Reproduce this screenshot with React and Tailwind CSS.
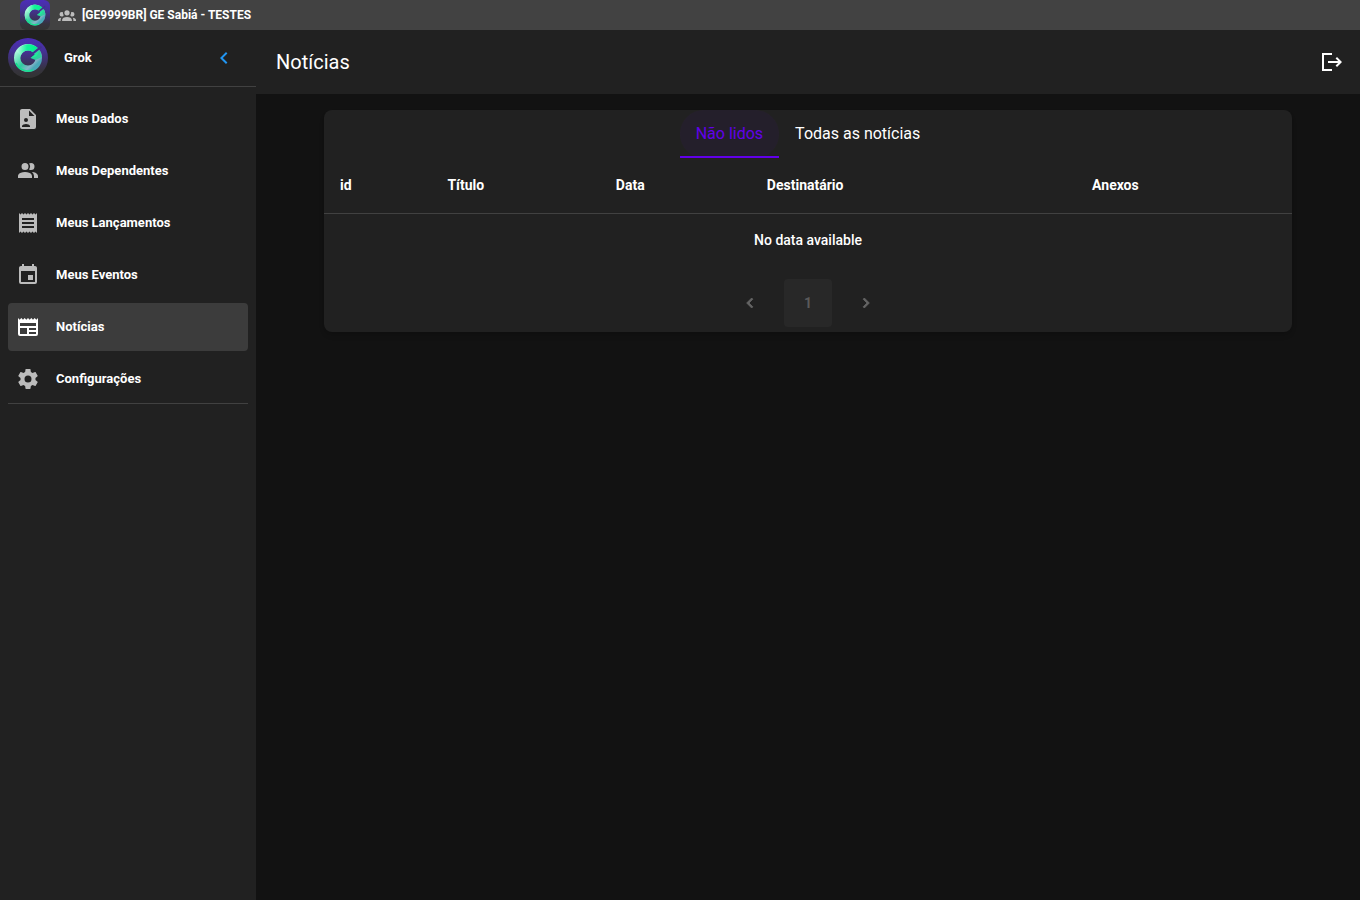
import { useState } from 'react';

const icons = {
  fileAccount: 'M6,2C4.89,2 4,2.89 4,4V20A2,2 0 0,0 6,22H18A2,2 0 0,0 20,20V8L14,2H6M13,3.5L18.5,9H13V3.5M10,11A2,2 0 0,1 12,13A2,2 0 0,1 10,15A2,2 0 0,1 8,13A2,2 0 0,1 10,11M14,20H6V19C6,17.67 8.67,17 10,17C11.33,17 14,17.67 14,19V20Z',
  accounts: 'M16 17V19H2V17S2 13 9 13 16 17 16 17M12.5 7.5A3.5 3.5 0 1 0 9 11A3.5 3.5 0 0 0 12.5 7.5M15.94 13A5.32 5.32 0 0 1 18 17V19H22V17S22 13.37 15.94 13M15 4A3.39 3.39 0 0 0 13.07 4.59A5 5 0 0 1 13.07 10.41A3.39 3.39 0 0 0 15 11A3.5 3.5 0 0 0 15 4Z',
  receipt: 'M3,22L4.5,20.5L6,22L7.5,20.5L9,22L10.5,20.5L12,22L13.5,20.5L15,22L16.5,20.5L18,22L19.5,20.5L21,22V2L19.5,3.5L18,2L16.5,3.5L15,2L13.5,3.5L12,2L10.5,3.5L9,2L7.5,3.5L6,2L4.5,3.5L3,2M18,9H6V7H18M18,13H6V11H18M18,17H6V15H18V17Z',
  calendar: 'M19,19H5V8H19M16,1V3H8V1H6V3H5C3.89,3 3,3.89 3,5V19A2,2 0 0,0 5,21H19A2,2 0 0,0 21,19V5C21,3.89 20.1,3 19,3H18V1M17,12H12V17H17V12Z',
  newspaper: 'M20,11H4V8H20M20,15H13V13H20M20,19H13V17H20M11,19H4V13H11M20.33,4.67L18.67,3L17,4.67L15.33,3L13.67,4.67L12,3L10.33,4.67L8.67,3L7,4.67L5.33,3L3.67,4.67L2,3V19A2,2 0 0,0 4,21H20A2,2 0 0,0 22,19V3L20.33,4.67Z',
  cog: 'M12,15.5A3.5,3.5 0 0,1 8.5,12A3.5,3.5 0 0,1 12,8.5A3.5,3.5 0 0,1 15.5,12A3.5,3.5 0 0,1 12,15.5M19.43,12.97C19.47,12.65 19.5,12.33 19.5,12C19.5,11.67 19.47,11.34 19.43,11L21.54,9.37C21.73,9.22 21.78,8.95 21.66,8.73L19.66,5.27C19.54,5.05 19.27,4.96 19.05,5.05L16.56,6.05C16.04,5.66 15.5,5.32 14.87,5.07L14.5,2.42C14.46,2.18 14.25,2 14,2H10C9.75,2 9.54,2.18 9.5,2.42L9.13,5.07C8.5,5.32 7.96,5.66 7.44,6.05L4.95,5.05C4.73,4.96 4.46,5.05 4.34,5.27L2.34,8.73C2.21,8.95 2.27,9.22 2.46,9.37L4.57,11C4.53,11.34 4.5,11.67 4.5,12C4.5,12.33 4.53,12.65 4.57,12.97L2.46,14.63C2.27,14.78 2.21,15.05 2.34,15.27L4.34,18.73C4.46,18.95 4.73,19.03 4.95,18.95L7.44,17.94C7.96,18.34 8.5,18.68 9.13,18.93L9.5,21.58C9.54,21.82 9.75,22 10,22H14C14.25,22 14.46,21.82 14.5,21.58L14.87,18.93C15.5,18.67 16.04,18.34 16.56,17.94L19.05,18.95C19.27,19.03 19.54,18.95 19.66,18.73L21.66,15.27C21.78,15.05 21.73,14.78 21.54,14.63L19.43,12.97Z',
  group: 'M12,5.5A3.5,3.5 0 0,1 15.5,9A3.5,3.5 0 0,1 12,12.5A3.5,3.5 0 0,1 8.5,9A3.5,3.5 0 0,1 12,5.5M5,8C5.56,8 6.08,8.15 6.53,8.42C6.38,9.85 6.8,11.27 7.66,12.38C7.16,13.34 6.16,14 5,14A3,3 0 0,1 2,11A3,3 0 0,1 5,8M19,8A3,3 0 0,1 22,11A3,3 0 0,1 19,14C17.84,14 16.84,13.34 16.34,12.38C17.2,11.27 17.62,9.85 17.47,8.42C17.92,8.15 18.44,8 19,8M5.5,18.25C5.5,16.18 8.41,14.5 12,14.5C15.59,14.5 18.5,16.18 18.5,18.25V20H5.5V18.25M0,20V18.5C0,17.11 1.89,15.94 4.45,15.6C3.86,16.28 3.5,17.22 3.5,18.25V20H0M24,20H20.5V18.25C20.5,17.22 20.14,16.28 19.55,15.6C22.11,15.94 24,17.11 24,18.5V20Z',
  chevronLeft: 'M15.41,16.58L10.83,12L15.41,7.41L14,6L8,12L14,18L15.41,16.58Z',
  chevronRight: 'M8.59,16.58L13.17,12L8.59,7.41L10,6L16,12L10,18L8.59,16.58Z',
  exit: 'M2,3H12V5H4V19H12V21H2V3M17,7L22,12L17,17L15.6,15.6L18.2,13H8V11H18.2L15.6,8.4L17,7Z',
};

const menu = [
  { label: 'Meus Dados', icon: 'fileAccount' },
  { label: 'Meus Dependentes', icon: 'accounts' },
  { label: 'Meus Lançamentos', icon: 'receipt' },
  { label: 'Meus Eventos', icon: 'calendar' },
  { label: 'Notícias', icon: 'newspaper' },
  { label: 'Configurações', icon: 'cog' },
];

const columns = [
  { label: 'id', width: 'w-[11.1%]' },
  { label: 'Título', width: 'w-[17.4%]' },
  { label: 'Data', width: 'w-[15.6%]' },
  { label: 'Destinatário', width: 'w-[33.6%]' },
  { label: 'Anexos', width: 'w-[22.3%]' },
];

const tabs = ['Não lidos', 'Todas as notícias'];

const Icon = ({ name, className }) => (
  <svg viewBox="0 0 24 24" fill="currentColor" className={`shrink-0 ${className}`} aria-hidden="true">
    <path d={icons[name]} />
  </svg>
);

const Logo = ({ id, className }) => (
  <svg viewBox="0 0 40 40" className={`shrink-0 ${className}`} aria-hidden="true">
    <defs>
      <linearGradient id={`${id}-bg`} x1="0" y1="0" x2="0" y2="1">
        <stop offset="0" stopColor="#4c2db8" />
        <stop offset="0.3" stopColor="#46319a" />
        <stop offset="0.8" stopColor="#35333d" />
        <stop offset="1" stopColor="#333333" />
      </linearGradient>
      <linearGradient id={`${id}-ring`} x1="0.1" y1="0.1" x2="0.85" y2="0.85">
        <stop offset="0" stopColor="#a8f5da" />
        <stop offset="0.25" stopColor="#6fe6bd" />
        <stop offset="0.55" stopColor="#2fc9a0" />
        <stop offset="0.85" stopColor="#86b5c8" />
        <stop offset="1" stopColor="#4aa7b8" />
      </linearGradient>
      <linearGradient id={`${id}-arc`} x1="0" y1="0" x2="1" y2="0">
        <stop offset="0" stopColor="#c4f7e6" />
        <stop offset="0.5" stopColor="#12f59a" />
        <stop offset="1" stopColor="#00f08c" />
      </linearGradient>
    </defs>
    <rect width="40" height="40" fill={`url(#${id}-bg)`} />
    <circle cx="20" cy="20" r="10.8" fill="none" stroke={`url(#${id}-ring)`} strokeWidth="6.4" />
    <path d="M8.5,13 A13.8,13.8 0 0,1 29.5,9.8 L24.5,14 A7.6,7.6 0 0,0 12.8,17.5 Z" fill={`url(#${id}-arc)`} />
    <path d="M8,25 A13,13 0 0,0 25,32" fill="none" stroke="#17e08f" strokeWidth="1.8" />
    <path d="M33.5,8.5 L23.5,16.5" stroke="#42318c" strokeWidth="2.2" />
    <path d="M32,12.5 L34,19 L27.5,22 L22.5,20 Z" fill="#2fcf9d" />
    <path d="M32,12.5 L22.5,20 L28,18.5 Z" fill="#1cf09a" />
  </svg>
);

export default function App() {
  const [active, setActive] = useState('Notícias');
  const [tab, setTab] = useState(tabs[0]);

  return (
    <div className="flex min-h-screen flex-col bg-[#121212] font-[Roboto,sans-serif] text-white">
      {/* System bar */}
      <div className="flex h-[30px] items-center bg-[#424242] px-5">
        <Logo id="bar" className="size-[30px] rounded-md" />
        <Icon name="group" className="ml-2 size-[18px] text-[#bcbcbc]" />
        <span className="ml-[6px] text-xs font-bold">[GE9999BR] GE Sabiá - TESTES</span>
      </div>

      <div className="flex flex-1">
        {/* Sidebar */}
        <aside className="w-64 shrink-0 bg-[#212121]">
          <div className="flex h-[57px] items-center border-b border-[#414141] px-2">
            <Logo id="user" className="size-10 rounded-full" />
            <span className="ml-4 text-[13px] font-bold">Grok</span>
            <button aria-label="Recolher menu" className="mr-1.5 ml-auto flex size-9 items-center justify-center text-[#2196f3]">
              <Icon name="chevronLeft" className="size-6" />
            </button>
          </div>
          <nav className="mx-2 flex flex-col gap-1 border-b border-[#414141] pt-2">
            {menu.map((item) => (
              <a
                key={item.label}
                href="#"
                onClick={() => setActive(item.label)}
                className={`flex h-12 items-center gap-4 rounded px-2 text-[13px] font-bold ${
                  active === item.label ? 'bg-[#3c3c3c]' : 'hover:bg-[#2c2c2c]'
                }`}
              >
                <Icon name={item.icon} className={`size-6 ${active === item.label ? 'text-white' : 'text-[#bcbcbc]'}`} />
                {item.label}
              </a>
            ))}
          </nav>
        </aside>

        <div className="min-w-0 flex-1">
          {/* Header */}
          <header className="flex h-16 items-center justify-between bg-[#212121] pr-4 pl-5">
            <h1 className="text-xl">Notícias</h1>
            <button aria-label="Sair">
              <Icon name="exit" className="size-6" />
            </button>
          </header>

          <main className="mx-auto max-w-[1000px] p-4">
            <div className="rounded-lg bg-[#212121] shadow-md">
              <div role="tablist" className="flex justify-center">
                {tabs.map((t) => (
                  <button
                    key={t}
                    role="tab"
                    aria-selected={tab === t}
                    onClick={() => setTab(t)}
                    className={`relative h-12 px-4 ${tab === t ? 'text-[#6200ea]' : 'text-white'}`}
                  >
                    {tab === t && <span className="absolute inset-0 rounded-3xl bg-[#6200ea]/5" />}
                    {tab === t && <span className="absolute inset-x-0 bottom-0 h-0.5 bg-[#6200ea]" />}
                    {t}
                  </button>
                ))}
              </div>

              <table className="w-full table-fixed text-sm font-medium">
                <thead>
                  <tr className="h-[55px] border-b border-[#414141]">
                    {columns.map((c) => (
                      <th key={c.label} className={`px-4 text-left font-bold ${c.width}`}>
                        {c.label}
                      </th>
                    ))}
                  </tr>
                </thead>
                <tbody>
                  <tr className="h-[53px]">
                    <td colSpan={5} className="px-4 text-center">No data available</td>
                  </tr>
                </tbody>
              </table>

              {/* Pagination */}
              <div className="flex justify-center gap-[10px] pt-[13px] pb-[5px] text-[#646464]">
                <button aria-label="Página anterior" disabled className="flex size-12 items-center justify-center">
                  <Icon name="chevronLeft" className="size-5 stroke-current" />
                </button>
                <button className="size-12 rounded bg-[#282828] text-sm font-bold text-[#5a5a5a]">1</button>
                <button aria-label="Próxima página" disabled className="flex size-12 items-center justify-center">
                  <Icon name="chevronRight" className="size-5 stroke-current" />
                </button>
              </div>
            </div>
          </main>
        </div>
      </div>
    </div>
  );
}
